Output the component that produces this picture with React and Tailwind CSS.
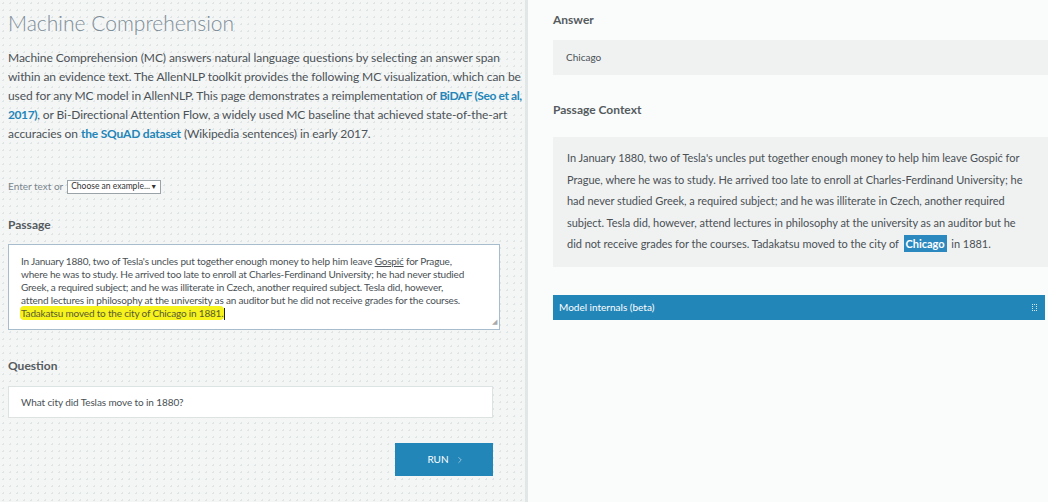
import { ChevronRight } from 'lucide-react';

const font = { fontFamily: '"Lato", "Open Sans", sans-serif' };

function Label({ children, className = '' }) {
  return <div className={`text-[12px] font-bold text-[#555b5e] ${className}`}>{children}</div>;
}

function LeftPane() {
  return (
    <div className="w-[525px] shrink-0 h-full bg-[#f4f6f6] bg-[radial-gradient(#dfe5e5_1px,transparent_1px)] bg-[length:7px_7px] pl-2 pr-[25px]">
      <h1 className="text-[21px] font-light text-[#7d8c96] pt-[10px] leading-[26px]">Machine Comprehension</h1>
      <p className="mt-[12px] text-[12px] tracking-[-0.08px] leading-[19px] text-[#4c5256] whitespace-nowrap">
        Machine Comprehension (MC) answers natural language questions by selecting an answer span<br />
        within an evidence text. The AllenNLP toolkit provides the following MC visualization, which can be<br />
        used for any MC model in AllenNLP. This page demonstrates a reimplementation of{' '}
        <a className="font-bold text-[#2385b8] tracking-[-0.4px]">BiDAF (Seo et al,<br />2017)</a>, or Bi-Directional Attention Flow, a widely used MC baseline that achieved state-of-the-art<br />
        accuracies on <a className="font-bold text-[#2385b8] tracking-[-0.2px]">the SQuAD dataset</a> (Wikipedia sentences) in early 2017.
      </p>
      <div className="mt-[36px] flex items-center gap-[4px] text-[10px] text-[#7a858c]">
        <span>Enter text or</span>
        <div className="w-[94px] h-[14px] border border-[#9aa3a8] bg-white flex items-center justify-between px-[3px] text-[8.5px] text-[#333] whitespace-nowrap">
          <span>Choose an example...</span>
          <span className="text-[7px]">▼</span>
        </div>
      </div>
      <Label className="mt-[22px]">Passage</Label>
      <div className="mt-[10px] w-[492px] h-[86px] border border-[#a7bccc] bg-white pl-[12px] pt-[10px] text-[10px] tracking-[-0.18px] leading-[13px] text-[#4a5054] whitespace-nowrap relative">
        In January 1880, two of Tesla's uncles put together enough money to help him leave <span className="underline">Gospić</span> for Prague,<br />
        where he was to study. He arrived too late to enroll at Charles-Ferdinand University; he had never studied<br />
        Greek, a required subject; and he was illiterate in Czech, another required subject. Tesla did, however,<br />
        attend lectures in philosophy at the university as an auditor but he did not receive grades for the courses.<br />
        <span className="bg-[#f6f21c] text-[#5a5a30] rounded-sm px-[1px] py-[1px] -ml-[1px]">Tadakatsu moved to the city of Chicago in 1881.</span>
        <span className="inline-block w-px h-[12px] bg-[#222] align-middle" />
        <span className="absolute right-[2px] bottom-[1px] text-[7px] text-[#aaa]">◢</span>
      </div>
      <Label className="mt-[27px]">Question</Label>
      <div className="mt-[11px] w-[485px] h-[32px] border border-[#dde2e3] bg-white flex items-center pl-[12px] text-[10px] tracking-[-0.1px] text-[#4a5054]">
        What city did Teslas move to in 1880?
      </div>
      <div className="mt-[25px] w-[485px] flex justify-end">
        <button className="w-[98px] h-[33px] bg-[#2386b9] text-white text-[10px] flex items-center justify-center gap-[6px] pl-[4px]">
          RUN <ChevronRight size={10} strokeWidth={1.5} className="text-[#cfe3ee]" />
        </button>
      </div>
    </div>
  );
}

function RightPane() {
  return (
    <div className="flex-1 h-full bg-[#fafbfb] pl-[25px]">
      <Label className="pt-[11px]">Answer</Label>
      <div className="mt-[11px] h-[35px] bg-[#f0f2f2] flex items-center pl-[13px] text-[10px] text-[#4a5054]">Chicago</div>
      <Label className="mt-[26px]">Passage Context</Label>
      <div className="mt-[18px] h-[130px] bg-[#f0f2f2] pl-[14px] pt-[10px] text-[11px] tracking-[-0.03px] leading-[21.5px] text-[#4a5054] whitespace-nowrap">
        In January 1880, two of Tesla's uncles put together enough money to help him leave Gospić for<br />
        Prague, where he was to study. He arrived too late to enroll at Charles-Ferdinand University; he<br />
        had never studied Greek, a required subject; and he was illiterate in Czech, another required<br />
        subject. Tesla did, however, attend lectures in philosophy at the university as an auditor but he<br />
        did not receive grades for the courses. Tadakatsu moved to the city of{' '}
        <span className="bg-[#2b89c0] text-white font-bold px-[2px] py-[2px] mx-[2px]">Chicago</span> in 1881.
      </div>
      <div className="mt-[28px] mr-[3px] h-[25px] bg-[#2386b9] flex items-center justify-between pl-[6px] pr-[8px] text-[10px] text-white">
        <span>Model internals (beta)</span>
        <span className="w-[5px] h-[7px] border border-dotted border-[#d8e8f0]" />
      </div>
    </div>
  );
}

export default function App() {
  return (
    <div className="w-[1048px] h-[502px] flex overflow-hidden" style={font}>
      <LeftPane />
      <div className="w-[3px] h-full bg-[#e1e6e6]" />
      <RightPane />
    </div>
  );
}
